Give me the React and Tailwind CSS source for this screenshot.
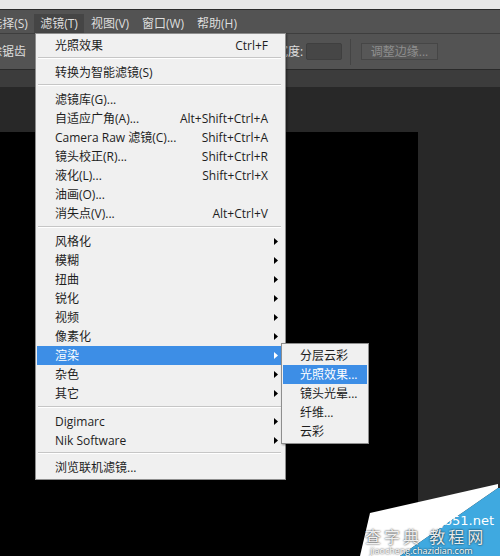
import React from 'react'

const FONT = "font-['Open_Sans','Noto_Sans_CJK_SC',sans-serif]"

const menuItems = [
  { label: '光照效果', shortcut: 'Ctrl+F' },
  { sep: 'h-[8px] pt-[2px]' },
  { label: '转换为智能滤镜(S)' },
  { sep: 'h-[8px] pt-[2px]' },
  { label: '滤镜库(G)...' },
  { label: '自适应广角(A)...', shortcut: 'Alt+Shift+Ctrl+A' },
  { label: 'Camera Raw 滤镜(C)...', shortcut: 'Shift+Ctrl+A' },
  { label: '镜头校正(R)...', shortcut: 'Shift+Ctrl+R' },
  { label: '液化(L)...', shortcut: 'Shift+Ctrl+X' },
  { label: '油画(O)...' },
  { label: '消失点(V)...', shortcut: 'Alt+Ctrl+V' },
  { sep: 'h-[9px] pt-[3px]' },
  { label: '风格化', arrow: true },
  { label: '模糊', arrow: true },
  { label: '扭曲', arrow: true },
  { label: '锐化', arrow: true },
  { label: '视频', arrow: true },
  { label: '像素化', arrow: true },
  { label: '渲染', arrow: true, active: true },
  { label: '杂色', arrow: true },
  { label: '其它', arrow: true },
  { sep: 'h-[9px] pt-[3px]' },
  { label: 'Digimarc', arrow: true },
  { label: 'Nik Software', arrow: true },
  { sep: 'h-[8px] pt-[2px]' },
  { label: '浏览联机滤镜...' },
]

const subItems = ['分层云彩', '光照效果...', '镜头光晕...', '纤维...', '云彩']

function Arrow({ white }) {
  return (
    <svg width="4" height="7" viewBox="0 0 4 7" className="shrink-0">
      <path d="M0 0 L4 3.5 L0 7 Z" fill={white ? '#ffffff' : '#000000'} />
    </svg>
  )
}

function MenuRow({ item }) {
  if (item.sep) {
    return (
      <div className={item.sep}>
        <div className="ml-[2px] mr-[4px] h-px bg-[#c6c6c6]" />
        <div className="ml-[2px] mr-[4px] h-px bg-[#ffffff]" />
      </div>
    )
  }
  return (
    <div
      className={`mx-[1px] h-[19px] flex items-center pl-[18px] pr-[6px] text-[12px] ${
        item.active ? 'bg-[#3d8ee6] text-white' : 'text-[#1e1e1e]'
      }`}
    >
      <span className="flex-1 whitespace-nowrap">{item.label}</span>
      {item.shortcut && <span className="mr-[10px] whitespace-nowrap">{item.shortcut}</span>}
      {item.arrow && <Arrow white={item.active} />}
    </div>
  )
}

function MenuBarItem({ label, w, active }) {
  return (
    <div
      className={`${w} h-[19px] shrink-0 flex items-center justify-center whitespace-nowrap ${
        active ? 'bg-[#454545]' : ''
      }`}
    >
      {label}
    </div>
  )
}

export default function App() {
  return (
    <div className={`relative w-[500px] h-[556px] overflow-hidden bg-[#272727] flex flex-col ${FONT}`}>
      {/* window title strip */}
      <div className="h-[9px] bg-[#e8e8e8]" />
      <div className="h-px bg-[#2c2c2c]" />

      {/* menu bar */}
      <div className="h-[23px] bg-[#535353] flex items-end text-[12px] text-[#dedede]">
        <div className="ml-[-16px] flex">
          <MenuBarItem label="选择(S)" w="w-[50px]" />
          <MenuBarItem label="滤镜(T)" w="w-[50px]" active />
          <MenuBarItem label="视图(V)" w="w-[52px]" />
          <MenuBarItem label="窗口(W)" w="w-[54px]" />
          <MenuBarItem label="帮助(H)" w="w-[54px]" />
        </div>
      </div>
      <div className="h-px bg-[#3e3e3e]" />

      {/* options bar */}
      <div className="h-[35px] bg-[#535353] flex items-center text-[12px] text-[#dedede]">
        <span className="ml-[-22px] w-[48px] whitespace-nowrap">消除锯齿</span>
        <span className="ml-[250px] w-[30px] whitespace-nowrap">宽度:</span>
        <div className="w-[36px] h-[17px] rounded-[2px] bg-[#464646] border border-[#3f3f3f]" />
        <div className="ml-[8px] w-px h-[26px] bg-[#444444]" />
        <div className="ml-[10px] w-[77px] h-[17px] border border-[#464646] bg-[#575757] flex items-center justify-center text-[#8e8e8e]">
          调整边缘...
        </div>
      </div>
      <div className="h-px bg-[#2a2a2a]" />

      {/* document tabs */}
      <div className="h-[17px] bg-[#3c3c3c]" />

      {/* workspace */}
      <div className="flex-1 flex">
        <div className="w-[418px] flex flex-col">
          <div className="h-[45px] bg-[#282828]" />
          <div className="flex-1 bg-black" />
        </div>
        <div className="flex-1 bg-[#282828]" />
      </div>

      {/* filter menu */}
      <div className="absolute left-[35px] top-[33px] w-[251px] h-[447px] bg-[#f0f0f0] border border-[#8e8e8e] pt-[2px] shadow-[1px_1px_2px_rgba(0,0,0,0.4)]">
        {menuItems.map((item, i) => (
          <MenuRow key={i} item={item} />
        ))}
      </div>

      {/* render submenu */}
      <div className="absolute left-[281px] top-[343px] w-[88px] h-[101px] bg-[#f0f0f0] border border-[#8e8e8e] pt-[2px] shadow-[1px_1px_2px_rgba(0,0,0,0.4)]">
        {subItems.map((label, i) => (
          <div
            key={i}
            className={`mx-[1px] h-[19px] flex items-center pl-[17px] text-[12px] whitespace-nowrap ${
              i === 1 ? 'bg-[#3d8ee6] text-white' : 'text-[#1e1e1e]'
            }`}
          >
            {label}
          </div>
        ))}
      </div>

      {/* watermark */}
      <div className="absolute right-0 bottom-0 w-[145px] h-[74px]">
        <svg width="145" height="74" viewBox="0 0 145 74" className="absolute inset-0">
          <polygon points="15,31 143,2 143,6 45,74 5,74" fill="#ffffff" />
          <polygon points="143,6 145,6 145,74 45,74" fill="#3fa9e0" />
        </svg>
        <div className="absolute right-[6px] top-[32px] text-[13px] leading-none text-white font-['DejaVu_Sans',sans-serif]">
          jb51.net
        </div>
        <div className="absolute left-[10px] top-[47px] text-[16px] leading-none whitespace-nowrap text-white/90 tracking-[3px] [text-shadow:0_0_2px_#000]">
          查字典 教程网
        </div>
        <div className="absolute left-[15px] top-[64px] text-[9px] leading-none whitespace-nowrap text-white [text-shadow:0_0_2px_#000]">
          jiaocheng.chazidian.com
        </div>
      </div>
    </div>
  )
}
